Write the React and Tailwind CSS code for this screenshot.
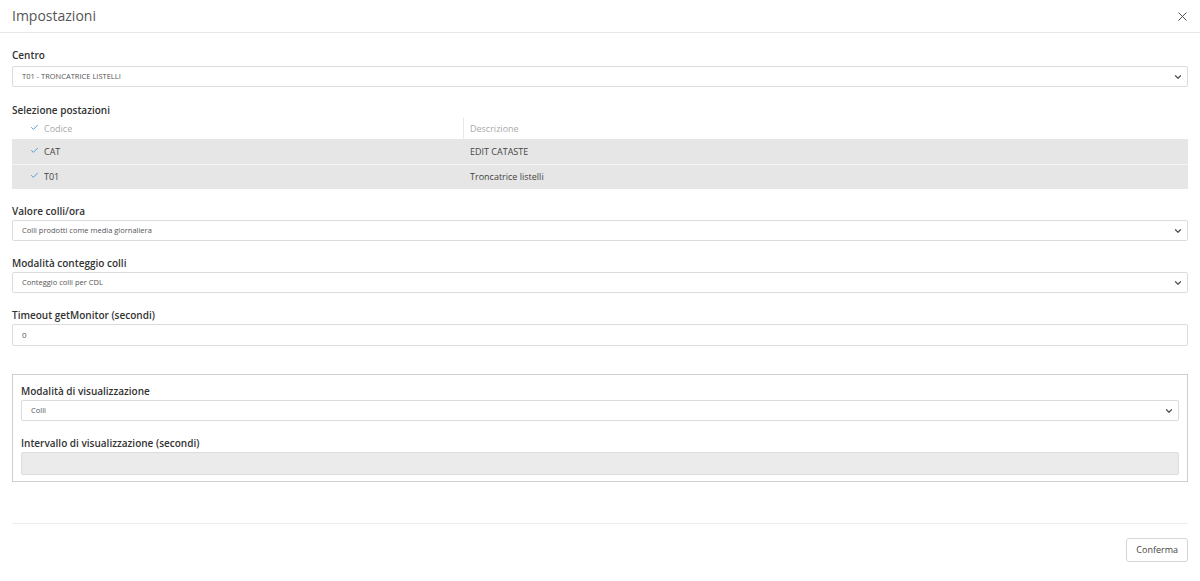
import { ChevronDown, X, Check } from "lucide-react"

function Label({ children, className = "" }) {
  return (
    <div className={`text-[10px] leading-[14px] font-semibold text-[#333] ${className}`}>
      {children}
    </div>
  )
}

function Select({ value, className = "" }) {
  return (
    <div className={`flex items-center justify-between h-[21px] border border-[#dcdcdc] rounded-[2px] bg-white pl-[9px] pr-[4px] ${className}`}>
      <span className="text-[7.5px] text-[#555]">{value}</span>
      <ChevronDown size={10} strokeWidth={3} className="text-[#555]" />
    </div>
  )
}

function CheckMark() {
  return <Check size={9} strokeWidth={2.5} className="text-[#4a9ad8] -mt-[3px]" />
}

export default function App() {
  const rows = [
    { code: "CAT", desc: "EDIT CATASTE" },
    { code: "T01", desc: "Troncatrice listelli" },
  ]

  return (
    <div className="w-[1200px] h-[581px] bg-white flex flex-col" style={{ fontFamily: '"Open Sans", "Noto Sans", sans-serif' }}>

      {/* header */}
      <div className="h-[33px] flex items-center justify-between px-3 border-b border-[#e8e8e8]">
        <span className="text-[14px] text-[#555] -mt-[2px]">Impostazioni</span>
        <X size={15} strokeWidth={1.5} className="text-[#444] mr-[-2px]" />
      </div>

      <div className="flex flex-col px-3">

        <Label className="mt-[15px]">Centro</Label>
        <Select value="T01 - TRONCATRICE LISTELLI" className="mt-[4px]" />

        <Label className="mt-[16px]">Selezione postazioni</Label>
        <div className="mt-[1px] text-[9px]">
          <div className="flex h-[21px] items-center text-[#aaa]">
            <div className="w-[451px] flex items-center gap-[5px] pl-[18px]">
              <CheckMark />
              <span>Codice</span>
            </div>
            <div className="h-full border-l border-[#e8e8e8] pl-[6px] flex items-center">Descrizione</div>
          </div>
          {rows.map((r, i) => (
            <div key={r.code} className={`flex h-[25px] items-center bg-[#e6e6e6] text-[#444] ${i > 0 ? "border-t border-[#f4f4f4]" : ""}`}>
              <div className="w-[452px] flex items-center gap-[5px] pl-[18px]">
                <CheckMark />
                <span>{r.code}</span>
              </div>
              <div className="pl-[6px]">{r.desc}</div>
            </div>
          ))}
        </div>

        <Label className="mt-[15px]">Valore colli/ora</Label>
        <Select value="Colli prodotti come media giornaliera" className="mt-[2px]" />

        <Label className="mt-[15px]">Modalità conteggio colli</Label>
        <Select value="Conteggio colli per CDL" className="mt-[2px]" />

        <Label className="mt-[15px]">Timeout getMonitor (secondi)</Label>
        <div className="mt-[2px] h-[22px] border border-[#dcdcdc] rounded-[2px] flex items-center pl-[9px] text-[8px] text-[#555]">0</div>

        <div className="mt-[28px] border border-[#cfcfcf] h-[108px] px-[8px] pt-[9px] flex flex-col">
          <Label>Modalità di visualizzazione</Label>
          <Select value="Colli" className="mt-[2px]" />
          <Label className="mt-[15px]">Intervallo di visualizzazione (secondi)</Label>
          <div className="mt-[2px] h-[23px] border border-[#dcdcdc] rounded-[2px] bg-[#ebebeb]" />
        </div>

        <div className="mt-[41px] border-t border-[#ececec]" />

        <div className="flex justify-end mt-[14px]">
          <button className="h-[24px] px-[9px] border border-[#d6d6d6] rounded-[3px] bg-white text-[9px] text-[#444]">
            Conferma
          </button>
        </div>
      </div>
    </div>
  )
}
